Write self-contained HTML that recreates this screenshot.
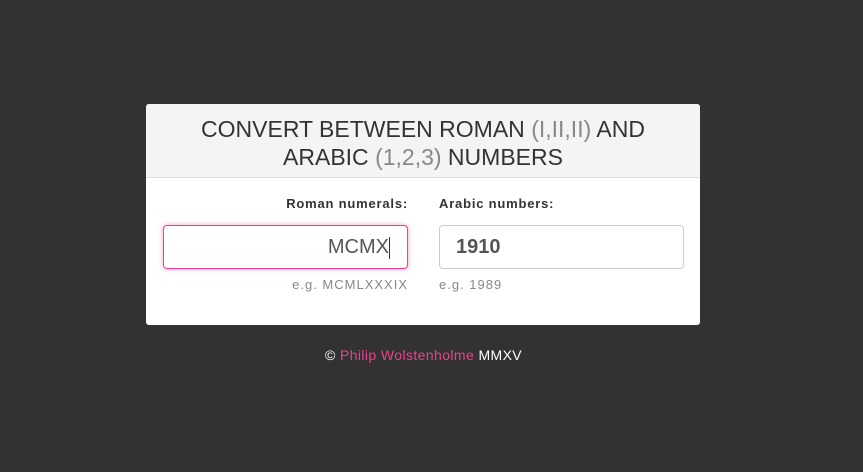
<!DOCTYPE html>
<html><head><style>
body{margin:0;width:863px;height:472px;background:#323232;font-family:"Liberation Sans",sans-serif;position:relative;overflow:hidden}
.card{position:absolute;left:146px;top:104px;width:554px;height:221px;background:#fff;border-radius:3px;overflow:hidden}
.hd{height:74px;background:#f4f4f4;border-bottom:1px solid #ddd;text-align:center;color:#333;font-size:23px;line-height:28px;padding-top:11px;box-sizing:border-box}
.hd span{color:#888}
.lbl{position:absolute;top:92px;font-size:13px;font-weight:bold;color:#333;letter-spacing:.8px}
.inp{position:absolute;top:121px;width:245px;height:44px;box-sizing:border-box;border:1px solid #ccc;border-radius:4px;font-size:20px;color:#555;line-height:42px;padding:0 16px}
.hint{position:absolute;top:173px;font-size:13px;color:#888;letter-spacing:1px}
.ft{position:absolute;top:347px;width:100%;left:-8px;text-align:center;font-size:14px;color:#fff;letter-spacing:.4px}
.ft a{color:#ee3f8f;text-decoration:none}
</style></head><body>
<div class="card">
<div class="hd">CONVERT BETWEEN ROMAN <span>(I,II,II)</span> AND<br>ARABIC <span>(1,2,3)</span> NUMBERS</div>
<div class="lbl" style="right:292px">Roman numerals:</div>
<div class="lbl" style="left:293px">Arabic numbers:</div>
<div class="inp" style="left:17px;border-color:#ee3f8f;box-shadow:0 0 5px rgba(238,63,143,.5);text-align:right;padding-right:17px">MCMX<span style="display:inline-block;width:1px;height:22px;background:#333;vertical-align:middle"></span></div>
<div class="inp" style="left:293px;font-weight:bold">1910</div>
<div class="hint" style="right:292px">e.g. MCMLXXXIX</div>
<div class="hint" style="left:293px">e.g. 1989</div>
</div>
<div class="ft">© <a>Philip Wolstenholme</a> MMXV</div>
</body></html>
